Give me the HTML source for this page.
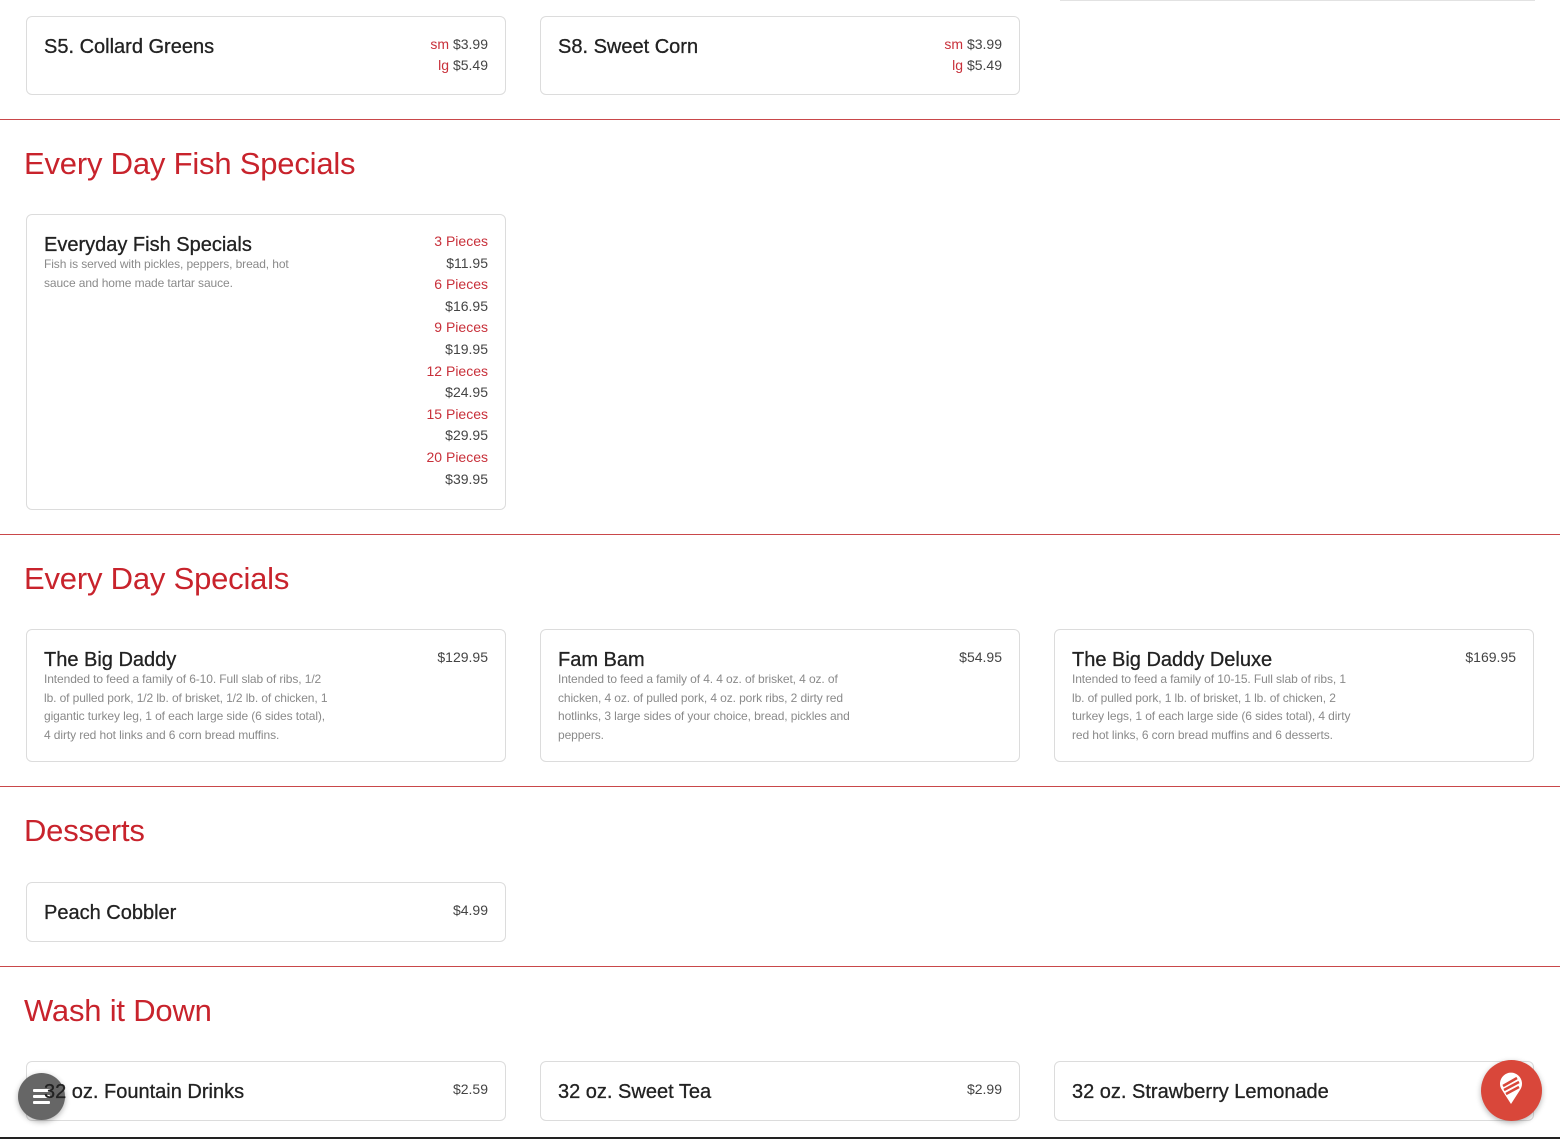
<!DOCTYPE html>
<html><head><meta charset="utf-8"><style>
*{box-sizing:border-box;margin:0;padding:0}
body{width:1560px;height:1139px;overflow:hidden;background:#fff;font-family:"Liberation Sans",Arial,sans-serif;position:relative}
.card{position:absolute;border:1px solid #dcdcdc;border-radius:6px;background:#fff;width:480px}
.t{position:absolute;left:17px;top:19px;font-size:20px;color:#222;font-weight:normal;-webkit-text-stroke:0.3px #222;white-space:nowrap;z-index:5}
.p{position:absolute;right:17px;top:19px;font-size:14px;color:#444;text-align:right;line-height:21.6px}
.r{color:#c8303a}
.d{position:absolute;left:17px;top:40px;font-size:12px;color:#8a8a8a;line-height:18.5px;white-space:nowrap;letter-spacing:-0.1px}
.hr{position:absolute;left:0;width:1560px;height:1px;background:#c9484a}
h2{position:absolute;left:24px;font-size:31px;font-weight:normal;color:#c8232c;letter-spacing:-0.2px}
</style></head><body>
<div style="position:absolute;left:1060px;top:0;width:475px;height:1px;background:#e2e2e2"></div>

<div class="card" style="left:26px;top:16px;height:79px"><div class="t">S5. Collard Greens</div><div class="p" style="top:17px;line-height:21px"><span class="r">sm</span> $3.99<br><span class="r">lg</span> $5.49</div></div>
<div class="card" style="left:540px;top:16px;height:79px"><div class="t">S8. Sweet Corn</div><div class="p" style="top:17px;line-height:21px"><span class="r">sm</span> $3.99<br><span class="r">lg</span> $5.49</div></div>

<div class="hr" style="top:119px"></div>
<h2 style="top:146px">Every Day Fish Specials</h2>
<div class="card" style="left:26px;top:214px;height:296px"><div class="t">Everyday Fish Specials</div>
<div class="d">Fish is served with pickles, peppers, bread, hot<br>sauce and home made tartar sauce.</div>
<div class="p" style="top:16px"><span class="r">3 Pieces</span><br>$11.95<br><span class="r">6 Pieces</span><br>$16.95<br><span class="r">9 Pieces</span><br>$19.95<br><span class="r">12 Pieces</span><br>$24.95<br><span class="r">15 Pieces</span><br>$29.95<br><span class="r">20 Pieces</span><br>$39.95</div></div>

<div class="hr" style="top:534px"></div>
<h2 style="top:561px">Every Day Specials</h2>
<div class="card" style="left:26px;top:629px;height:133px"><div class="t">The Big Daddy</div><div class="p" style="top:17px">$129.95</div>
<div class="d">Intended to feed a family of 6-10. Full slab of ribs, 1/2<br>lb. of pulled pork, 1/2 lb. of brisket, 1/2 lb. of chicken, 1<br>gigantic turkey leg, 1 of each large side (6 sides total),<br>4 dirty red hot links and 6 corn bread muffins.</div></div>
<div class="card" style="left:540px;top:629px;height:133px"><div class="t">Fam Bam</div><div class="p" style="top:17px">$54.95</div>
<div class="d">Intended to feed a family of 4. 4 oz. of brisket, 4 oz. of<br>chicken, 4 oz. of pulled pork, 4 oz. pork ribs, 2 dirty red<br>hotlinks, 3 large sides of your choice, bread, pickles and<br>peppers.</div></div>
<div class="card" style="left:1054px;top:629px;height:133px"><div class="t">The Big Daddy Deluxe</div><div class="p" style="top:17px">$169.95</div>
<div class="d">Intended to feed a family of 10-15. Full slab of ribs, 1<br>lb. of pulled pork, 1 lb. of brisket, 1 lb. of chicken, 2<br>turkey legs, 1 of each large side (6 sides total), 4 dirty<br>red hot links, 6 corn bread muffins and 6 desserts.</div></div>

<div class="hr" style="top:786px"></div>
<h2 style="top:813px">Desserts</h2>
<div class="card" style="left:26px;top:882px;height:60px"><div class="t">Peach Cobbler</div><div class="p" style="top:17px">$4.99</div></div>

<div class="hr" style="top:966px"></div>
<h2 style="top:993px">Wash it Down</h2>
<div class="card" style="left:26px;top:1061px;height:60px"><div class="t">32 oz. Fountain Drinks</div><div class="p" style="top:17px">$2.59</div></div>
<div class="card" style="left:540px;top:1061px;height:60px"><div class="t">32 oz. Sweet Tea</div><div class="p" style="top:17px">$2.99</div></div>
<div class="card" style="left:1054px;top:1061px;height:60px"><div class="t">32 oz. Strawberry Lemonade</div><div class="p" style="top:17px">$2.99</div></div>
<div style="position:absolute;left:0;top:1137px;width:1560px;height:2px;background:#222"></div>

<div style="position:absolute;z-index:1;left:18px;top:1073px;width:47px;height:47px;border-radius:50%;background:#666;box-shadow:0 2px 6px rgba(0,0,0,.3)">
<div style="position:absolute;left:15px;top:16px;width:17px;height:3px;background:#fff;border-radius:1px"></div>
<div style="position:absolute;left:15px;top:22px;width:17px;height:3px;background:#fff;border-radius:1px"></div>
<div style="position:absolute;left:15px;top:28px;width:17px;height:3px;background:#fff;border-radius:1px"></div></div>

<div style="position:absolute;z-index:6;left:1481px;top:1060px;width:61px;height:61px;border-radius:50%;background:#d9473a;box-shadow:0 2px 6px rgba(0,0,0,.3)">
<svg width="61" height="61" viewBox="0 0 61 61"><path d="M30 44 L21 30 A11 11 0 1 1 39 30 Z" fill="#fff"/><path d="M22 26 L36 18 M23 30 L38 22 M25 34 L38 27" stroke="#d9473a" stroke-width="2.5" fill="none"/></svg></div>
</body></html>
